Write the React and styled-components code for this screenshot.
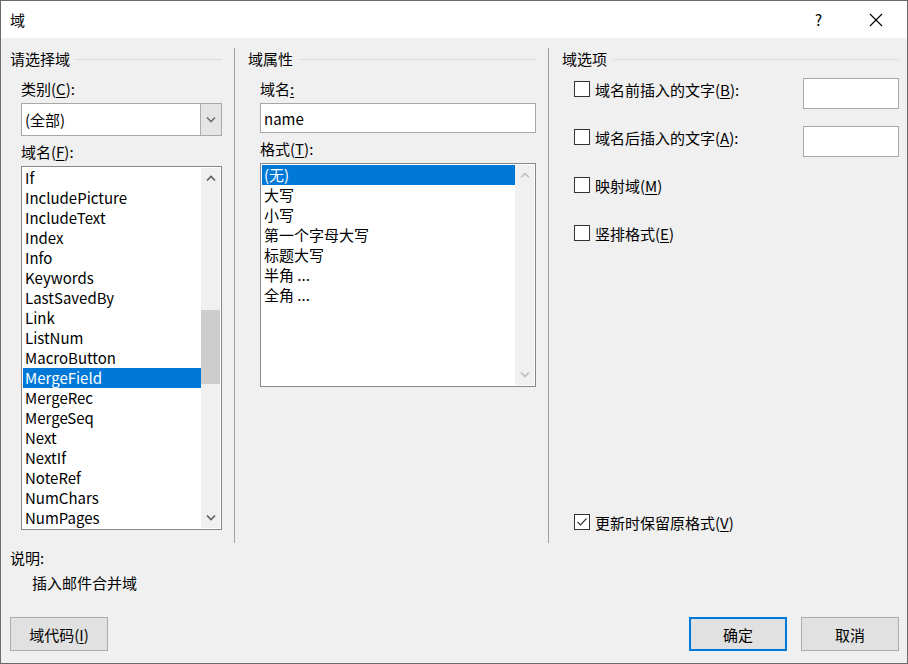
import React from 'react';
import styled, {createGlobalStyle} from 'styled-components';

const Global = createGlobalStyle`
  html, body {
    margin: 0;
    padding: 0;
    background: #f0f0f0;
  }
  * {
    box-sizing: border-box;
  }
`;

const FONT = `"Noto Sans CJK SC", "Noto Sans", sans-serif`;

const Window = styled.div`
  width: 908px;
  height: 664px;
  border: 1px solid #6b6b6b;
  background: #f0f0f0;
  font-family: ${FONT};
  font-size: 15px;
  color: #000;
  display: flex;
  flex-direction: column;
`;

const TitleBar = styled.div`
  height: 37px;
  background: #fff;
  display: flex;
  align-items: center;
  padding-left: 9px;
  padding-right: 3px;
`;

const Title = styled.div`
  flex: 1;
  font-size: 15px;
`;

const TitleButton = styled.div`
  width: 57px;
  height: 37px;
  display: flex;
  align-items: center;
  justify-content: center;
  font-size: 15px;
  color: #000;
`;

const Body = styled.div`
  flex: 1;
  display: flex;
  flex-direction: column;
  padding: 10px 8px 0 9px;
`;

const Columns = styled.div`
  display: flex;
  height: 495px;
`;

const Column = styled.div`
  width: ${(p) => (p.$width ? `${p.$width}px` : 'auto')};
  flex: ${(p) => (p.$width ? 'none' : '1')};
  padding-left: ${(p) => p.$pl}px;
  padding-right: ${(p) => (p.$last ? 0 : 12)}px;
  border-right: ${(p) => (p.$last ? 'none' : '1px solid #a0a0a0')};
  display: flex;
  flex-direction: column;
`;

const GroupHead = styled.div`
  display: flex;
  align-items: center;
  height: 22px;
  line-height: 22px;
  &::after {
    content: '';
    flex: 1;
    height: 1px;
    background: #dcdcdc;
    margin-left: 6px;
  }
`;

const Indent = styled.div`
  padding-left: ${(p) => p.$pl}px;
  display: flex;
  flex-direction: column;
`;

const Label = styled.div`
  height: 22px;
  line-height: 22px;
  margin-top: ${(p) => p.$mt || 0}px;
  margin-bottom: ${(p) => p.$mb || 0}px;
`;

const Key = styled.span`
  text-decoration: underline;
  text-underline-offset: 2px;
`;

const Select = styled.div`
  height: 33px;
  background: #fff;
  border: 1px solid #a8a8a8;
  display: flex;
  align-items: stretch;
`;

const SelectText = styled.div`
  flex: 1;
  padding-left: 3px;
  display: flex;
  align-items: center;
`;

const SelectButton = styled.div`
  width: 21px;
  background: #e5e5e5;
  border-left: 1px solid #adadad;
  display: flex;
  align-items: center;
  justify-content: center;
`;

const TextInput = styled.div`
  height: 30px;
  background: #fff;
  border: 1px solid #a8a8a8;
  padding-left: 3px;
  display: flex;
  align-items: center;
`;

const ListBox = styled.div`
  height: ${(p) => p.$h}px;
  background: #fff;
  border: 1px solid #828790;
  display: flex;
  padding: 1px;
`;

const Items = styled.div`
  flex: 1;
  overflow: hidden;
`;

const Item = styled.div`
  height: 20px;
  line-height: 20px;
  padding-left: 2px;
  white-space: nowrap;
  background: ${(p) => (p.$sel ? '#0078d7' : 'transparent')};
  color: ${(p) => (p.$sel ? '#fff' : '#000')};
`;

const ScrollBar = styled.div`
  width: 19px;
  background: #f0f0f0;
  display: flex;
  flex-direction: column;
  align-items: stretch;
`;

const Arrow = styled.div`
  height: 20px;
  display: flex;
  align-items: center;
  justify-content: center;
`;

const Track = styled.div`
  flex: 1;
  padding-top: ${(p) => p.$top}px;
`;

const Thumb = styled.div`
  height: ${(p) => p.$h}px;
  background: #cdcdcd;
`;

const CheckRow = styled.div`
  display: flex;
  align-items: center;
  height: 32px;
  margin-top: ${(p) => p.$mt || 0}px;
  margin-bottom: ${(p) => p.$mb || 0}px;
`;

const Box = styled.div`
  width: 16px;
  height: 16px;
  border: 1px solid #333;
  background: #fff;
  margin-right: 5px;
  display: flex;
  align-items: center;
  justify-content: center;
`;

const CheckText = styled.div`
  flex: 1;
`;

const SmallInput = styled.div`
  width: 96px;
  height: 31px;
  align-self: flex-start;
  margin-top: 5px;
  background: #fff;
  border: 1px solid #a8a8a8;
`;

const Spacer = styled.div`
  flex: 1;
`;

const Desc = styled.div`
  padding-left: ${(p) => p.$pl || 0}px;
  height: 22px;
  line-height: 22px;
  margin-top: ${(p) => p.$mt || 0}px;
`;

const ButtonRow = styled.div`
  display: flex;
  align-items: center;
  margin-top: 23px;
`;

const Button = styled.div`
  width: 98px;
  height: 34px;
  background: #e1e1e1;
  border: ${(p) => (p.$primary ? '2px solid #0078d7' : '1px solid #adadad')};
  display: flex;
  align-items: center;
  justify-content: center;
  margin-left: ${(p) => p.$ml || 0}px;
`;

const Chevron = ({up, color = '#606060'}) => (
  <svg width="10" height="6" viewBox="0 0 10 6">
    <path
      d={up ? 'M1 5.5 L5 1.5 L9 5.5' : 'M1 0.5 L5 4.5 L9 0.5'}
      fill="none"
      stroke={color}
      strokeWidth="1.6"
    />
  </svg>
);

const fields = [
  'If',
  'IncludePicture',
  'IncludeText',
  'Index',
  'Info',
  'Keywords',
  'LastSavedBy',
  'Link',
  'ListNum',
  'MacroButton',
  'MergeField',
  'MergeRec',
  'MergeSeq',
  'Next',
  'NextIf',
  'NoteRef',
  'NumChars',
  'NumPages',
];

const formats = ['(无)', '大写', '小写', '第一个字母大写', '标题大写', '半角 ...', '全角 ...'];

const CheckBox = ({checked}) => (
  <Box>
    {checked && (
      <svg width="12" height="10" viewBox="0 0 12 10">
        <path d="M1.5 5 L4.5 8 L10.5 1.5" fill="none" stroke="#333" strokeWidth="1.2" />
      </svg>
    )}
  </Box>
);

export default function App() {
  return (
    <>
      <Global />
      <Window>
        <TitleBar>
          <Title>域</Title>
          <TitleButton>?</TitleButton>
          <TitleButton>
            <svg width="14" height="14" viewBox="0 0 14 14">
              <path d="M1 1 L13 13 M13 1 L1 13" stroke="#000" strokeWidth="1.1" />
            </svg>
          </TitleButton>
        </TitleBar>
        <Body>
          <Columns>
            <Column $width={225} $pl={0}>
              <GroupHead>请选择域</GroupHead>
              <Indent $pl={11}>
                <Label $mt={8} $mb={3}>
                  类别(<Key>C</Key>):
                </Label>
                <Select>
                  <SelectText>(全部)</SelectText>
                  <SelectButton>
                    <Chevron color="#707070" />
                  </SelectButton>
                </Select>
                <Label $mt={5} $mb={3}>
                  域名(<Key>F</Key>):
                </Label>
                <ListBox $h={364}>
                  <Items>
                    {fields.map((f) => (
                      <Item key={f} $sel={f === 'MergeField'}>
                        {f}
                      </Item>
                    ))}
                  </Items>
                  <ScrollBar>
                    <Arrow>
                      <Chevron up />
                    </Arrow>
                    <Track $top={122}>
                      <Thumb $h={74} />
                    </Track>
                    <Arrow>
                      <Chevron />
                    </Arrow>
                  </ScrollBar>
                </ListBox>
              </Indent>
            </Column>
            <Column $width={314} $pl={13}>
              <GroupHead>域属性</GroupHead>
              <Indent $pl={12}>
                <Label $mt={8} $mb={3}>
                  域名<Key>:</Key>
                </Label>
                <TextInput>name</TextInput>
                <Label $mt={5} $mb={3}>
                  格式(<Key>T</Key>):
                </Label>
                <ListBox $h={224}>
                  <Items>
                    {formats.map((f) => (
                      <Item key={f} $sel={f === '(无)'}>
                        {f}
                      </Item>
                    ))}
                  </Items>
                  <ScrollBar>
                    <Arrow>
                      <Chevron up color="#c0c0c0" />
                    </Arrow>
                    <Track $top={0} />
                    <Arrow>
                      <Chevron color="#c0c0c0" />
                    </Arrow>
                  </ScrollBar>
                </ListBox>
              </Indent>
            </Column>
            <Column $pl={13} $last>
              <GroupHead>域选项</GroupHead>
              <Indent $pl={12}>
                <CheckRow $mt={3}>
                  <CheckBox />
                  <CheckText>
                    域名前插入的文字(<Key>B</Key>):
                  </CheckText>
                  <SmallInput />
                </CheckRow>
                <CheckRow $mt={16}>
                  <CheckBox />
                  <CheckText>
                    域名后插入的文字(<Key>A</Key>):
                  </CheckText>
                  <SmallInput />
                </CheckRow>
                <CheckRow $mt={16}>
                  <CheckBox />
                  <CheckText>
                    映射域(<Key>M</Key>)
                  </CheckText>
                </CheckRow>
                <CheckRow $mt={16}>
                  <CheckBox />
                  <CheckText>
                    竖排格式(<Key>E</Key>)
                  </CheckText>
                </CheckRow>
              </Indent>
              <Spacer />
              <Indent $pl={12}>
                <CheckRow $mb={5}>
                  <CheckBox checked />
                  <CheckText>
                    更新时保留原格式(<Key>V</Key>)
                  </CheckText>
                </CheckRow>
              </Indent>
            </Column>
          </Columns>
          <Desc $mt={4}>说明:</Desc>
          <Desc $pl={22} $mt={3}>
            插入邮件合并域
          </Desc>
          <ButtonRow>
            <Button>
              域代码(<Key>I</Key>)
            </Button>
            <Spacer />
            <Button $primary>确定</Button>
            <Button $ml={14}>取消</Button>
          </ButtonRow>
        </Body>
      </Window>
    </>
  );
}
